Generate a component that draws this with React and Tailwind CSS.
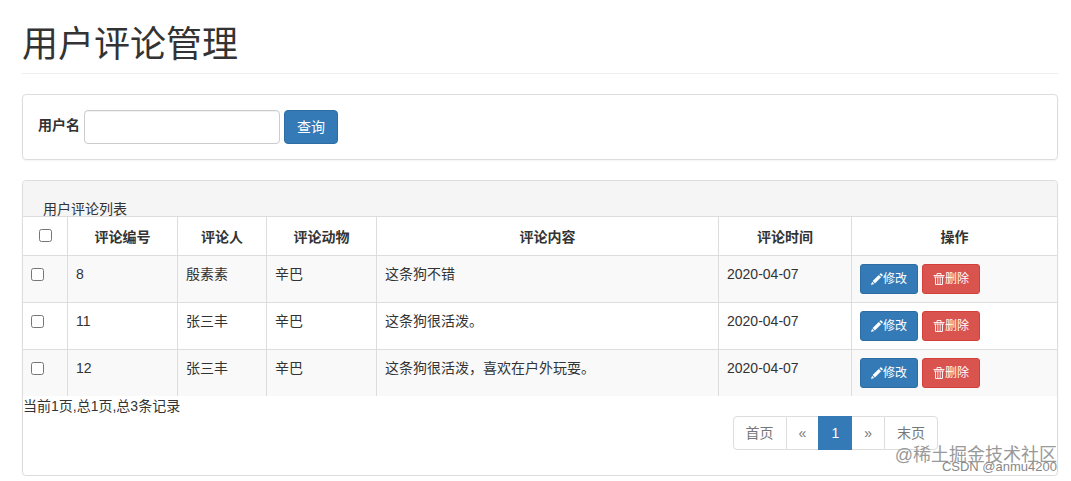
import React, { useState } from 'react'

const initialComments = [
  { id: 8, user: '殷素素', animal: '辛巴', content: '这条狗不错', date: '2020-04-07' },
  { id: 11, user: '张三丰', animal: '辛巴', content: '这条狗很活泼。', date: '2020-04-07' },
  { id: 12, user: '张三丰', animal: '辛巴', content: '这条狗很活泼，喜欢在户外玩耍。', date: '2020-04-07' },
]

const PencilIcon = () => (
  <svg viewBox="0 0 12 12" className="size-3 shrink-0" fill="currentColor" aria-hidden="true">
    <path d="M0 12 L1.1 8.8 L3.2 10.9 Z" />
    <path d="M1.6 8.1 L7.8 1.9 L10.1 4.2 L3.9 10.4 Z" />
    <path d="M8.4 1.3 L9.3 0.4 Q9.8 0 10.3 0.4 L11.6 1.7 Q12 2.2 11.6 2.7 L10.7 3.6 Z" />
  </svg>
)

const TrashIcon = () => (
  <svg viewBox="0 0 12 12" className="size-3 shrink-0" fill="none" stroke="currentColor" aria-hidden="true">
    <path d="M4 2 V0.5 H8 V2 M0.5 2.5 H11.5 M1 4 H11 M2.5 4 V11.5 H9.5 V4" strokeWidth="0.9" />
    <path d="M4.8 4 V11 M7.2 4 V11" strokeWidth="0.8" />
  </svg>
)

function SearchPanel({ keyword, onChange, onSearch }) {
  const handleSubmit = (e) => {
    e.preventDefault()
    onSearch()
  }

  return (
    <section className="mb-5 rounded border border-[#ddd] p-[15px] shadow-xs">
      <form onSubmit={handleSubmit} className="flex items-center gap-1">
        <label htmlFor="username" className="pb-1 font-bold">用户名</label>
        <input
          id="username"
          type="text"
          value={keyword}
          onChange={(e) => onChange(e.target.value)}
          className="h-[34px] w-[196px] rounded border border-[#ccc] px-3 inset-shadow-2xs"
        />
        <button
          type="submit"
          className="h-[34px] cursor-pointer rounded border border-[#2e6da4] bg-[#337ab7] px-3 text-white"
        >
          查询
        </button>
      </form>
    </section>
  )
}

function Pagination() {
  return (
    <nav aria-label="分页" className="mr-[119px] flex justify-end text-[#777]">
      <a href="#first" className="rounded-l border border-[#ddd] px-3 py-[6px]">首页</a>
      <a href="#prev" className="border-y border-[#ddd] px-3 py-[6px]">«</a>
      <a href="#1" aria-current="page" className="border border-[#337ab7] bg-[#337ab7] px-3 py-[6px] text-white">1</a>
      <a href="#next" className="border-y border-[#ddd] px-3 py-[6px]">»</a>
      <a href="#last" className="rounded-r border border-[#ddd] px-3 py-[6px]">末页</a>
    </nav>
  )
}

function App() {
  const [keyword, setKeyword] = useState('')
  const [comments, setComments] = useState(initialComments)
  const [selected, setSelected] = useState([])

  const handleSearch = () => {
    setComments(initialComments.filter((c) => c.user.includes(keyword)))
  }

  const toggleAll = (e) => {
    setSelected(e.target.checked ? comments.map((c) => c.id) : [])
  }

  const toggleOne = (id) => {
    setSelected(selected.includes(id) ? selected.filter((s) => s !== id) : [...selected, id])
  }

  const removeComment = (id) => {
    setComments(comments.filter((c) => c.id !== id))
  }

  return (
    <div className="bg-white pt-[25px] pr-[13px] pl-[22px] font-['Liberation_Sans','Noto_Sans_CJK_SC',sans-serif] text-sm leading-5 text-[#333]">
      <header className="mb-5 border-b border-[#eee] pb-2">
        <h1 className="text-4xl leading-10">用户评论管理</h1>
      </header>

      <SearchPanel keyword={keyword} onChange={setKeyword} onSearch={handleSearch} />

      {/* Comment list */}
      <section className="relative rounded border border-[#ddd] pb-[25px] shadow-xs">
        <h2 className="h-9 rounded-t border-b border-[#ddd] bg-[#f5f5f5] px-5 pt-5 leading-4">用户评论列表</h2>

        <table className="w-full table-fixed border-separate border-spacing-0">
          <thead>
            <tr className="[&>th]:border-b [&>th]:border-[#ddd] [&>th]:px-2 [&>th]:pt-[10px] [&>th]:pb-2 [&>th:not(:last-child)]:border-r">
              <th className="w-[45px]">
                <input
                  type="checkbox"
                  aria-label="全选"
                  className="mx-auto mb-1 block size-[13px]"
                  checked={comments.length > 0 && selected.length === comments.length}
                  onChange={toggleAll}
                />
              </th>
              <th className="w-[110px]">评论编号</th>
              <th className="w-[89px]">评论人</th>
              <th className="w-[110px]">评论动物</th>
              <th>评论内容</th>
              <th className="w-[133px]">评论时间</th>
              <th className="w-[205px]">操作</th>
            </tr>
          </thead>
          <tbody>
            {comments.map((comment) => (
              <tr
                key={comment.id}
                className="odd:bg-[#f9f9f9] [&>td]:border-[#ddd] [&>td]:p-2 [&>td]:align-top [&>td:not(:last-child)]:border-r [&:not(:last-child)>td]:border-b"
              >
                <td>
                  <input
                    type="checkbox"
                    aria-label={`选择评论 ${comment.id}`}
                    className="mt-1 block size-[13px]"
                    checked={selected.includes(comment.id)}
                    onChange={() => toggleOne(comment.id)}
                  />
                </td>
                <td>{comment.id}</td>
                <td>{comment.user}</td>
                <td>{comment.animal}</td>
                <td>{comment.content}</td>
                <td>{comment.date}</td>
                <td>
                  <div className="flex gap-1 text-xs text-white">
                    <button
                      type="button"
                      className="flex h-[30px] cursor-pointer items-center rounded-[3px] border border-[#2e6da4] bg-[#337ab7] px-[10px]"
                    >
                      <PencilIcon />
                      修改
                    </button>
                    <button
                      type="button"
                      onClick={() => removeComment(comment.id)}
                      className="flex h-[30px] cursor-pointer items-center rounded-[3px] border border-[#d43f3a] bg-[#d9534f] px-[10px]"
                    >
                      <TrashIcon />
                      删除
                    </button>
                  </div>
                </td>
              </tr>
            ))}
          </tbody>
        </table>

        <p>当前1页,总1页,总{comments.length}条记录</p>
        <Pagination />

        {/* Watermarks */}
        <div className="pointer-events-none absolute right-0 bottom-2 text-lg leading-6 text-[#999]">
          @稀土掘金技术社区
        </div>
        <div className="pointer-events-none absolute right-0 bottom-0 text-[13px] leading-4 text-[#888]">
          CSDN @anmu4200
        </div>
      </section>
    </div>
  )
}

export default App
